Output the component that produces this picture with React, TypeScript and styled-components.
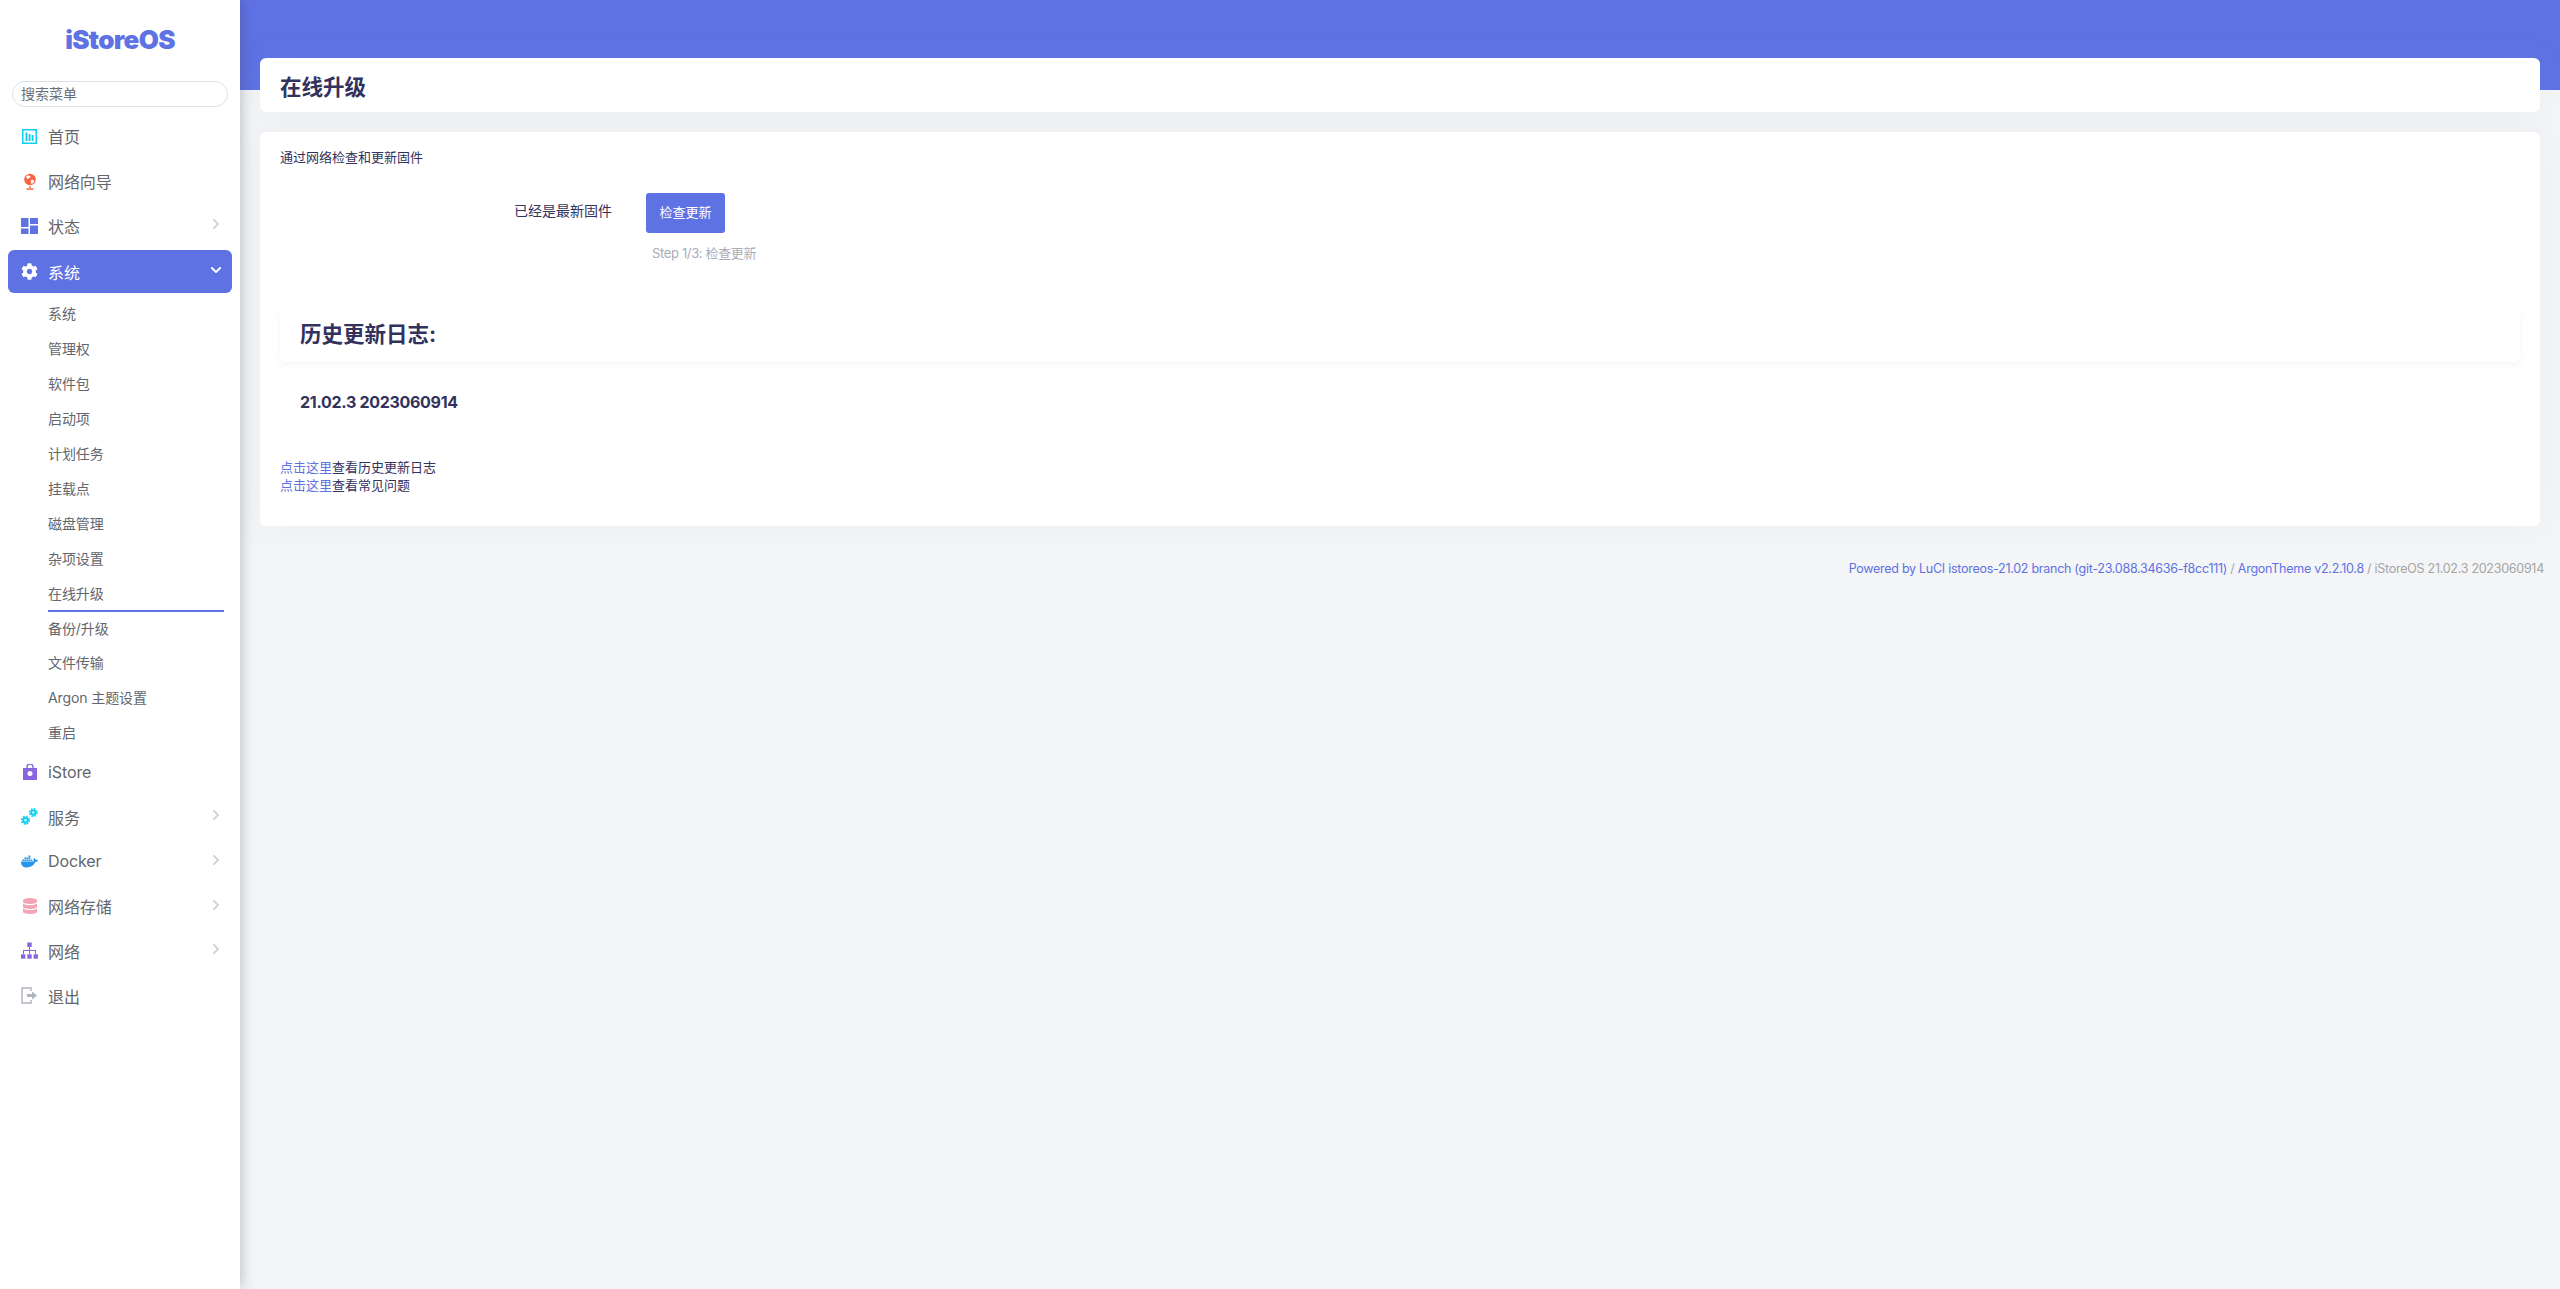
import React from 'react';
import styled, { createGlobalStyle } from 'styled-components';
import { FaChevronDown, FaChevronRight, FaCog, FaDatabase, FaDocker } from 'react-icons/fa';

const GlobalStyle = createGlobalStyle`
  html, body {
    margin: 0;
    padding: 0;
    height: 100%;
  }
  body {
    background: #f4f5f7;
    color: #32325d;
    font-family: Inter, "Noto Sans CJK SC", sans-serif;
  }
`;

const Page = styled.div`
  display: flex;
  height: 1289px;
  overflow: hidden;
`;

const Sidebar = styled.aside`
  flex: 0 0 240px;
  width: 240px;
  background: #fff;
  box-shadow: 0 0 14px rgba(60, 60, 70, 0.35);
  z-index: 2;
  display: flex;
  flex-direction: column;
`;

const Logo = styled.div`
  height: 81px;
  padding-top: 22px;
  box-sizing: border-box;
  text-align: center;
  font-family: Inter, sans-serif;
  font-weight: 900;
  font-size: 26px;
  letter-spacing: -0.7px;
  line-height: 36px;
  color: #5e72e4;
`;

const Search = styled.input`
  margin: 0 12px 0 12px;
  width: 216px;
  height: 26px;
  box-sizing: border-box;
  padding: 0 8px 2px;
  border: 1px solid #dee2e6;
  border-radius: 13px;
  outline: none;
  font-size: 14px;
  font-family: "Noto Sans CJK SC", sans-serif;
  &::placeholder {
    color: #6b6f76;
    opacity: 1;
  }
`;

const Menu = styled.nav`
  display: flex;
  flex-direction: column;
  padding: 7px 8px 0;
`;

const MenuItem = styled.div<{ $active?: boolean }>`
  display: flex;
  align-items: center;
  height: ${(p) => (p.$active ? '43px' : '44.7px')};
  margin: ${(p) => (p.$active ? '2px 0 0' : '0')};
  padding: 0 0 0 13px;
  border-radius: 6px;
  font-size: 16px;
  letter-spacing: -0.1px;
  color: ${(p) => (p.$active ? '#fff' : '#62666d')};
  background: ${(p) => (p.$active ? '#5e72e4' : 'transparent')};
`;

const IconSlot = styled.span<{ $color: string }>`
  flex: 0 0 17px;
  width: 17px;
  height: 17px;
  margin-right: 10px;
  display: flex;
  align-items: center;
  justify-content: center;
  color: ${(p) => p.$color};
  svg {
    display: block;
  }
`;

const Label = styled.span`
  flex: 1;
`;

const Arrow = styled.span<{ $active?: boolean }>`
  display: flex;
  width: 12px;
  margin-right: 10px;
  margin-top: -3px;
  font-size: 12px;
  color: ${(p) => (p.$active ? '#fff' : '#ced4da')};
`;

const SubMenu = styled.div`
  display: flex;
  flex-direction: column;
  margin-bottom: -1.500px;
  padding: 4px 0 0 40px;
`;

const SubItem = styled.div<{ $active?: boolean }>`
  height: 34.95px;
  box-sizing: border-box;
  width: 176px;
  font-size: 14px;
  line-height: 34px;
  letter-spacing: -0.1px;
  color: #62666d;
  border-bottom: 2px solid ${(p) => (p.$active ? '#5e72e4' : 'transparent')};
`;

const Main = styled.main`
  flex: 1;
  min-width: 0;
  padding: 58px 20px 0;
  background: linear-gradient(#5e72e4 90px, transparent 90px);
`;

const Card = styled.div`
  background: #fff;
  border-radius: 6px;
  box-shadow: 0 0 32px rgba(136, 152, 170, 0.08);
`;

const HeaderCard = styled(Card)`
  height: 54px;
  padding: 0 20px;
  display: flex;
  align-items: center;
`;

const Title = styled.h2`
  margin: 0;
  font-size: 21.5px;
  font-weight: 700;
  color: #32325d;
`;

const BodyCard = styled(Card)`
  margin-top: 20px;
  height: 394px;
  padding: 15px 20px 0;
  box-sizing: border-box;
`;

const Description = styled.div`
  font-size: 13px;
  line-height: 20px;
  color: #32325d;
`;

const UpdateRow = styled.div`
  margin-top: 26px;
  display: grid;
  grid-template-columns: 234px 132px auto;
  align-items: center;
`;

const Status = styled.div`
  grid-column: 2;
  margin-bottom: 7px;
  font-size: 14px;
  color: #32325d;
`;

const Button = styled.button`
  width: 79px;
  height: 40px;
  border: none;
  border-radius: 3px;
  background: #5e72e4;
  color: #fff;
  font-size: 13px;
  font-family: "Noto Sans CJK SC", sans-serif;
  padding: 0 0 3px;
`;

const StepText = styled.div`
  grid-column: 3;
  margin: 10px 0 0 6px;
  font-size: 13px;
  letter-spacing: -0.35px;
  line-height: 20px;
  color: #a9abb8;
`;

const LogHeading = styled.div`
  margin-top: 46px;
  height: 53px;
  padding: 0 20px 6px;
  box-sizing: border-box;
  display: flex;
  align-items: center;
  border-radius: 6px;
  box-shadow: 0 2px 8px rgba(136, 152, 170, 0.1);
  font-size: 21.5px;
  font-weight: 700;
  color: #32325d;
`;

const Version = styled.div`
  margin-top: 28px;
  padding-left: 20px;
  font-size: 16px;
  letter-spacing: -0.3px;
  font-weight: 700;
  line-height: 24px;
  color: #32325d;
`;

const HelpLines = styled.div`
  margin-top: 44px;
  font-size: 13px;
  line-height: 18px;
  color: #32325d;
`;

const HelpLink = styled.a`
  color: #5e72e4;
  text-decoration: none;
`;

const Footer = styled.footer`
  margin: 33px -4px 0 0;
  text-align: right;
  font-size: 12.5px;
  letter-spacing: -0.27px;
  line-height: 20px;
  color: #a5a5a5;
  a {
    color: #5e72e4;
    text-decoration: none;
  }
`;

const HomeIcon = () => (
  <svg width="15" height="15" viewBox="0 0 15 15" fill="currentColor">
    <path d="M0 0h15v15H0zM1.500 1.500v12h12v-12z" fillRule="evenodd" />
    <rect x="3.500" y="3.500" width="2" height="8.500" />
    <rect x="6.700" y="5" width="1.800" height="7" />
    <rect x="9.700" y="6" width="1.800" height="6" />
  </svg>
);

const GlobeIcon = () => (
  <svg width="14" height="17" viewBox="0 0 14 17">
    <circle cx="7" cy="6.500" r="5.800" fill="#fb6340" />
    <path d="M3.500 3c1.500-.6 3-.6 4 .4.300 1-1 1.300-1.800 1.900-.3 1-1.700.7-2.400-.2zM8 7c1.200-.4 2.800.1 3.300 1-.4 1.400-1.400 2.400-2.600 2.800C7.800 10 7.200 8.200 8 7z" fill="#fff" />
    <path d="M7 13v2M3.500 16h7" stroke="#fb6340" strokeWidth="1.400" fill="none" />
  </svg>
);

const StatusIcon = () => (
  <svg width="17" height="16" viewBox="0 0 17 16" fill="currentColor">
    <rect x="0" y="0" width="7.500" height="9" />
    <rect x="9" y="0" width="8" height="6" />
    <rect x="0" y="10.500" width="7.500" height="5.500" />
    <rect x="9" y="7.500" width="8" height="8.500" />
  </svg>
);

const BagIcon = () => (
  <svg width="14" height="16" viewBox="0 0 14 16" fill="currentColor">
    <path d="M0 4h14v12H0zM7 7a2.500 2.500 0 1 0 0 5 2.500 2.500 0 0 0 0-5z" fillRule="evenodd" />
    <path d="M4 5V3a3 3 0 0 1 6 0v2" fill="none" stroke="currentColor" strokeWidth="1.400" />
  </svg>
);

const GearsIcon = () => (
  <svg width="17" height="17" viewBox="0 0 17 17" fill="none" stroke="currentColor">
    <circle cx="4.500" cy="12.300" r="2.200" strokeWidth="2" />
    <circle cx="4.500" cy="12.300" r="3.700" strokeWidth="1.800" strokeDasharray="1.700 1.200" />
    <circle cx="12.300" cy="4.500" r="2.100" strokeWidth="1.900" />
    <circle cx="12.300" cy="4.500" r="3.600" strokeWidth="1.700" strokeDasharray="1.650 1.180" />
  </svg>
);

const SitemapIcon = () => (
  <svg width="17" height="17" viewBox="0 0 17 17" fill="currentColor">
    <rect x="6.300" y="0.500" width="4.400" height="4.400" />
    <path d="M8 5h1v3h6v4h-1V9H9v3H8V9H3v3H2V8h6z" />
    <rect x="0" y="12.300" width="4.400" height="4.400" />
    <rect x="6.300" y="12.300" width="4.400" height="4.400" />
    <rect x="12.600" y="12.300" width="4.400" height="4.400" />
  </svg>
);

const LogoutIcon = () => (
  <svg width="17" height="17" viewBox="0 0 17 17" fill="none" stroke="currentColor" strokeWidth="1.400">
    <path d="M10 4V1H1v15h9v-3" />
    <path d="M6 7h5V4.500l5 4-5 4V10H6z" fill="currentColor" stroke="none" />
  </svg>
);

const topItems = [
  { label: '首页', color: '#11cdef', icon: <HomeIcon /> },
  { label: '网络向导', color: '#fb6340', icon: <GlobeIcon /> },
  { label: '状态', color: '#5e72e4', icon: <StatusIcon />, arrow: true },
];

const systemItems = ['系统', '管理权', '软件包', '启动项', '计划任务', '挂载点', '磁盘管理', '杂项设置', '在线升级', '备份/升级', '文件传输', 'Argon 主题设置', '重启'];

const bottomItems = [
  { label: 'iStore', color: '#8965e0', icon: <BagIcon /> },
  { label: '服务', color: '#11cdef', icon: <GearsIcon />, arrow: true },
  { label: 'Docker', color: '#2496ed', icon: <FaDocker size={17} />, arrow: true },
  { label: '网络存储', color: '#f3a4b5', icon: <FaDatabase size={16} />, arrow: true },
  { label: '网络', color: '#8965e0', icon: <SitemapIcon />, arrow: true },
  { label: '退出', color: '#adb5bd', icon: <LogoutIcon /> },
];

type Item = { label: string; color: string; icon: React.ReactNode; arrow?: boolean };

const renderItem = (item: Item) => (
  <MenuItem key={item.label}>
    <IconSlot $color={item.color}>{item.icon}</IconSlot>
    <Label>{item.label}</Label>
    {item.arrow && (
      <Arrow>
        <FaChevronRight />
      </Arrow>
    )}
  </MenuItem>
);

export default function App() {
  return (
    <>
      <GlobalStyle />
      <Page>
        <Sidebar>
          <Logo>iStoreOS</Logo>
          <Search placeholder="搜索菜单" />
          <Menu>
            {topItems.map(renderItem)}
            <MenuItem $active>
              <IconSlot $color="#fff">
                <FaCog size={17} />
              </IconSlot>
              <Label>系统</Label>
              <Arrow $active>
                <FaChevronDown />
              </Arrow>
            </MenuItem>
            <SubMenu>
              {systemItems.map((name) => (
                <SubItem key={name} $active={name === '在线升级'}>
                  {name}
                </SubItem>
              ))}
            </SubMenu>
            {bottomItems.map(renderItem)}
          </Menu>
        </Sidebar>
        <Main>
          <HeaderCard>
            <Title>在线升级</Title>
          </HeaderCard>
          <BodyCard>
            <Description>通过网络检查和更新固件</Description>
            <UpdateRow>
              <Status>已经是最新固件</Status>
              <Button>检查更新</Button>
              <StepText>Step 1/3: 检查更新</StepText>
            </UpdateRow>
            <LogHeading>历史更新日志:</LogHeading>
            <Version>21.02.3 2023060914</Version>
            <HelpLines>
              <div>
                <HelpLink href="#">点击这里</HelpLink>查看历史更新日志
              </div>
              <div>
                <HelpLink href="#">点击这里</HelpLink>查看常见问题
              </div>
            </HelpLines>
          </BodyCard>
          <Footer>
            <a href="#">Powered by LuCI istoreos-21.02 branch (git-23.088.34636-f8cc111)</a> /{' '}
            <a href="#">ArgonTheme v2.2.10.8</a> / iStoreOS 21.02.3 2023060914
          </Footer>
        </Main>
      </Page>
    </>
  );
}
